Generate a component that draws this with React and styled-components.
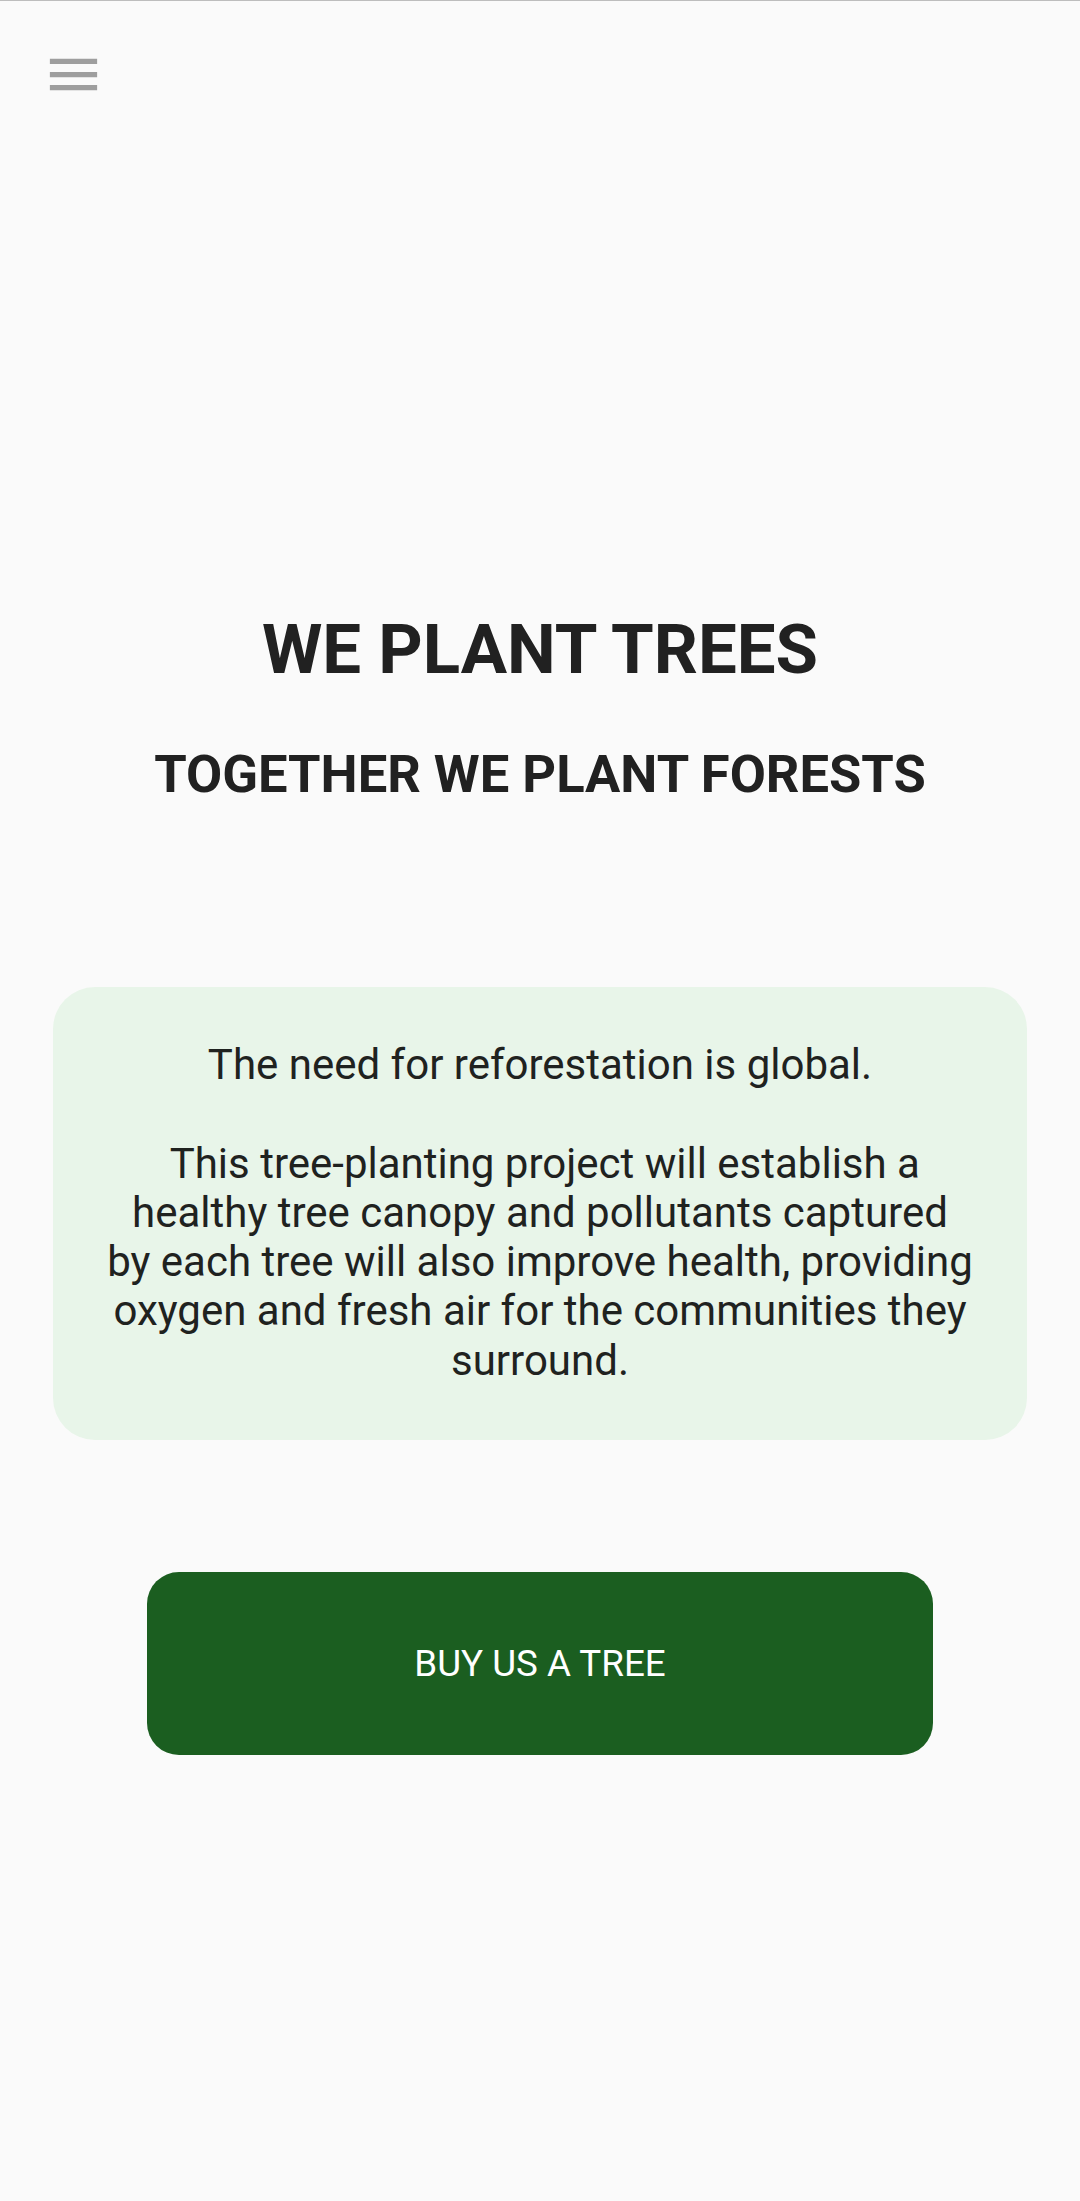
import React from "react";
import styled, { createGlobalStyle } from "styled-components";

const GlobalStyle = createGlobalStyle`
  html, body {
    margin: 0;
    padding: 0;
    background: #fafafa;
  }
  * { box-sizing: border-box; }
`;

const Page = styled.div`
  min-height: 2201px;
  background: #fafafa;
  border-top: 1px solid #bdbdbd;
  font-family: Roboto, "Noto Sans", sans-serif;
  color: #212121;
  display: flex;
  flex-direction: column;
`;

const TopBar = styled.header`
  display: flex;
  align-items: center;
  padding: 42px 0 0 42px;
`;

const MenuButton = styled.button`
  width: 63px;
  height: 63px;
  padding: 0;
  border: none;
  background: transparent;
  display: flex;
  cursor: pointer;
  svg { width: 63px; height: 63px; display: block; }
`;

const Hero = styled.section`
  margin-top: 504px;
  display: flex;
  flex-direction: column;
  align-items: center;
  text-align: center;
`;

const Title = styled.h1`
  margin: 0;
  font-size: 69px;
  line-height: 80px;
  font-weight: 700;
  color: #212121;
`;

const Subtitle = styled.h2`
  margin: 53px 0 0;
  font-size: 52.5px;
  line-height: 62px;
  font-weight: 700;
  color: #212121;
`;

const InfoCard = styled.div`
  margin: 182px 53px 0;
  padding: 53px 20px 55px;
  background: #e8f5e9;
  border-radius: 42px;
  text-align: center;
`;

const CardLine = styled.p`
  margin: 0;
  font-size: 42px;
  line-height: 49.3px;
  min-height: 49.3px;
  white-space: pre;
  color: #1f221f;
`;

const ActionButton = styled.button`
  margin: 132px 147px 0;
  height: 183px;
  border: none;
  border-radius: 32px;
  background: #1b5e20;
  color: #ffffff;
  font-family: Roboto, "Noto Sans", sans-serif;
  font-size: 36.75px;
  font-weight: 400;
  display: flex;
  align-items: center;
  justify-content: center;
  cursor: pointer;
`;

const lines = [
  "The need for reforestation is global.",
  "",
  " This tree-planting project will establish a",
  "healthy tree canopy and pollutants captured",
  "by each tree will also improve health, providing",
  "oxygen and fresh air for the communities they",
  "surround.",
];

function MenuIcon() {
  return (
    <svg viewBox="0 0 24 24" aria-hidden="true">
      <path fill="#9e9e9e" d="M3 18h18v-2H3v2zm0-5h18v-2H3v2zm0-7v2h18V6H3z" />
    </svg>
  );
}

export default function App() {
  return (
    <>
      <GlobalStyle />
      <Page>
        <TopBar>
          <MenuButton aria-label="menu">
            <MenuIcon />
          </MenuButton>
        </TopBar>
        <Hero>
          <Title>WE PLANT TREES</Title>
          <Subtitle>TOGETHER WE PLANT FORESTS</Subtitle>
        </Hero>
        <InfoCard>
          {lines.map((l, i) => (
            <CardLine key={i}>{l}</CardLine>
          ))}
        </InfoCard>
        <ActionButton>BUY US A TREE</ActionButton>
      </Page>
    </>
  );
}
